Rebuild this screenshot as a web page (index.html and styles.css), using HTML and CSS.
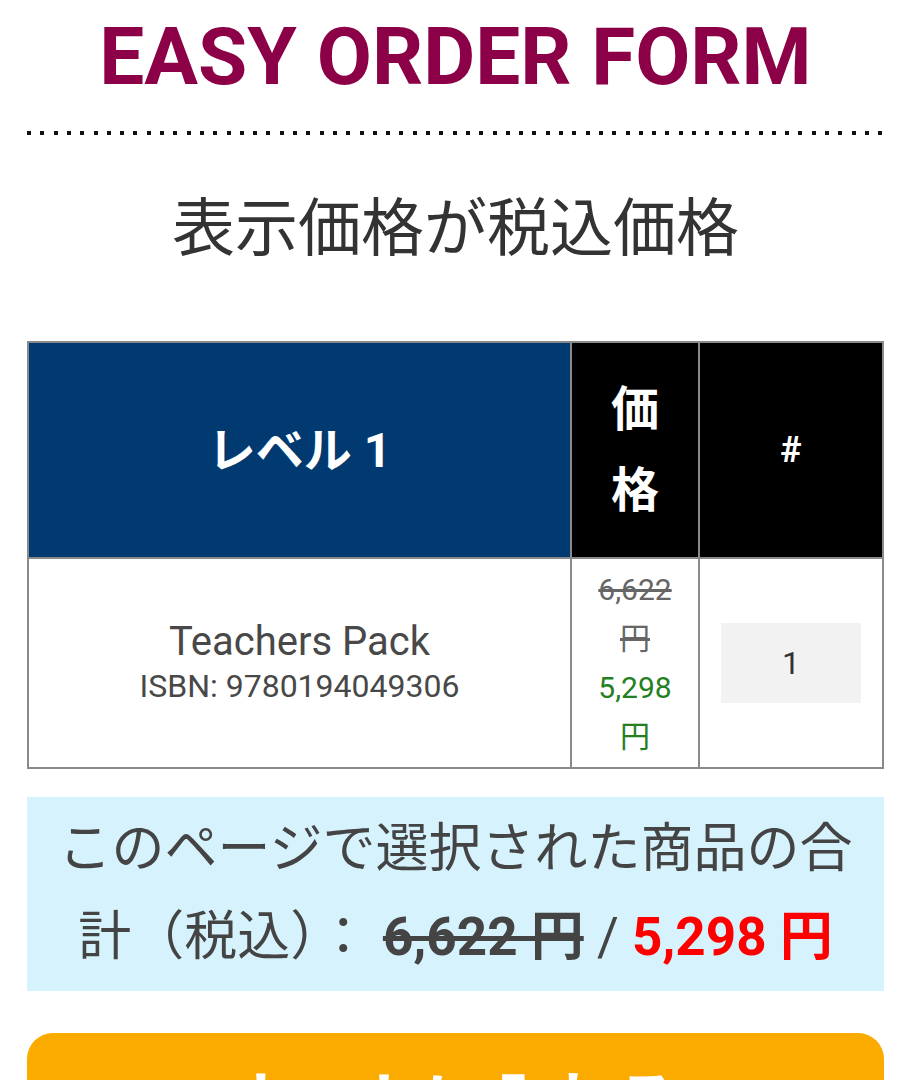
FILE: index.html
```html
<!DOCTYPE html>
<html lang="ja">
<head>
<meta charset="utf-8">
<link rel="stylesheet" href="styles.css">
</head>
<body>
<div class="page">
  <h1 class="title">EASY ORDER FORM</h1>
  <div class="dots"></div>
  <p class="subtitle">表示価格が税込価格</p>
  <table class="order">
    <thead>
      <tr>
        <th class="col-name">レベル 1</th>
        <th class="col-price">価格</th>
        <th class="col-qty">#</th>
      </tr>
    </thead>
    <tbody>
      <tr>
        <td class="name-cell">
          <div class="prod">Teachers Pack</div>
          <div class="isbn">ISBN: 9780194049306</div>
        </td>
        <td class="price-cell">
          <div class="old">6,622 円</div>
          <div class="new">5,298 円</div>
        </td>
        <td class="qty-cell"><div class="qty">1</div></td>
      </tr>
    </tbody>
  </table>
  <div class="summary">このページで選択された商品の合計（税込）： <span class="sum-old">6,622 円</span> / <span class="sum-new">5,298 円</span></div>
  <div class="cart-btn">カートに入れる</div>
</div>
</body>
</html>
```

FILE: styles.css
```css
* { box-sizing: border-box; }
html, body {
  margin: 0;
  padding: 0;
  background: #fff;
}
body {
  font-family: Roboto, "Noto Sans CJK JP", sans-serif;
  color: #444;
}
.page {
  padding: 0 27px;
}
.title {
  margin: 0;
  padding-top: 17px;
  font-size: 80px;
  line-height: 80px;
  font-weight: 700;
  color: #8c0047;
  text-align: center;
}
.dots {
  margin-top: 34px;
  height: 4px;
  background: repeating-linear-gradient(to right, #111 0 4px, transparent 4px 13.3px);
}
.subtitle {
  margin: 48px 0 0;
  font-family: "Noto Sans CJK JP", sans-serif;
  font-size: 63px;
  line-height: 80px;
  color: #333;
  text-align: center;
}
.order {
  margin-top: 78px;
  width: 100%;
  border-collapse: collapse;
  table-layout: fixed;
}
.order th, .order td {
  border: 2px solid #8a8a8a;
  text-align: center;
  vertical-align: middle;
}
.order th {
  height: 214px;
  padding: 26px 10px;
  font-size: 48px;
  line-height: 81px;
  font-weight: 700;
  color: #fff;
}
.col-name { width: 543px; background: #003a70; }
.col-price { width: 128px; background: #000; padding: 26px 30px !important; }
.col-qty { background: #000; font-size: 36px !important; }
.order td {
  height: 209px;
}
.name-cell { padding: 10px; }
.prod {
  font-size: 40px;
  line-height: 46px;
  color: #484848;
}
.isbn {
  font-size: 32px;
  line-height: 42px;
  color: #484848;
}
.price-cell {
  padding: 6px 16px;
  font-size: 30px;
  line-height: 49px;
}
.old {
  color: #666;
  text-decoration: line-through;
}
.new {
  color: #24801f;
}
.qty-cell { padding: 0 21px; }
.qty {
  height: 80px;
  background: #f2f2f2;
  font-size: 32px;
  line-height: 80px;
  color: #333;
}
.summary {
  margin-top: 28px;
  background: #d6f3fd;
  padding: 8px 16px 10px;
  font-family: Roboto, "Noto Sans CJK JP", sans-serif;
  font-size: 53px;
  line-height: 88px;
  color: #444;
  text-align: center;
}
.sum-old {
  font-weight: 700;
  text-decoration: line-through;
  color: #444;
}
.sum-new {
  font-weight: 700;
  color: #f00;
}
.cart-btn {
  margin-top: 42px;
  height: 120px;
  background: #fbab00;
  border-radius: 26px;
  color: #fff;
  font-family: "Noto Sans CJK JP", sans-serif;
  font-size: 64px;
  font-weight: 700;
  line-height: 120px;
  text-align: center;
  padding-top: 4px;
}
```
